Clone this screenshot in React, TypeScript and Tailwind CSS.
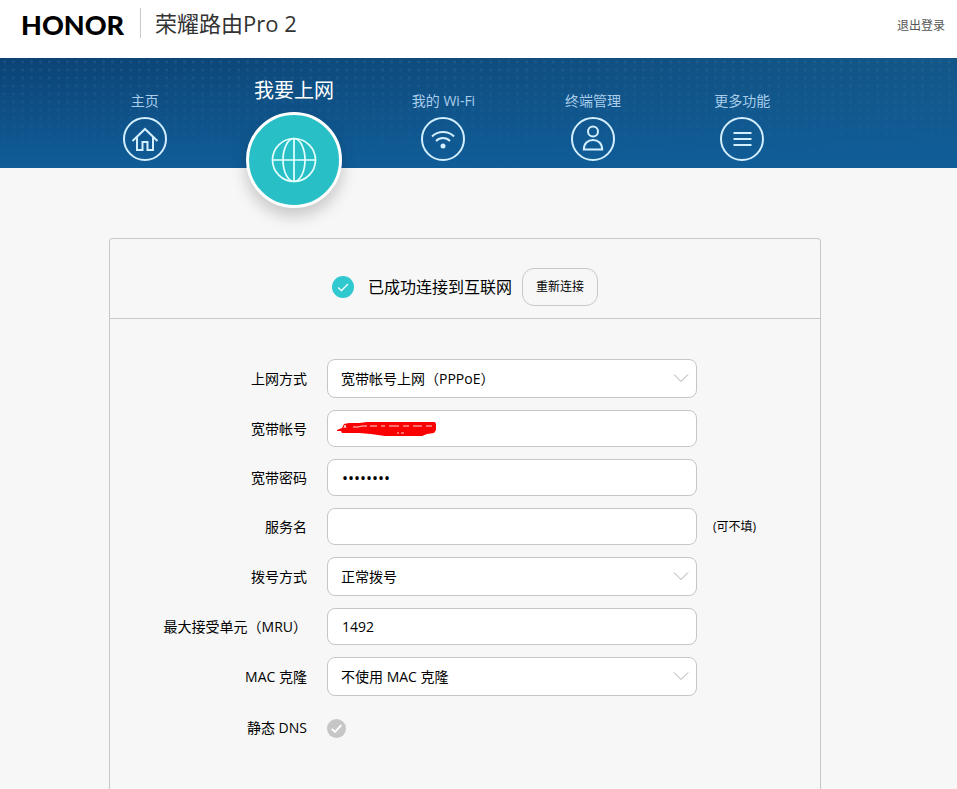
import type { ReactNode } from "react";

type NavItemProps = {
    label: string
    children: ReactNode
}

type FieldProps = {
    id: string
    label: string
    hint?: string
    children: ReactNode
}

type SelectProps = {
    id: string
    options: string[]
}

type TextInputProps = {
    id: string
    value?: string
}

const inputStyle = "block h-[37px] w-full rounded-lg border border-[#c6c6c6] bg-white px-3.5";

function NavItem({label, children}: NavItemProps) {
    return (
        <a href="#" className="flex flex-col items-center gap-1.5 pt-[33px] text-sm leading-5 text-[#a9cdea]">
            <span>{label}</span>
            <svg className="size-11" viewBox="0 0 44 44" fill="none" stroke="#d3efff" strokeWidth="2">
                <circle cx="22" cy="22" r="21" />
                {children}
            </svg>
        </a>
    );
}

function Field({id, label, hint, children}: FieldProps) {
    return (
        <div className="grid grid-cols-[197px_minmax(0,370px)_1fr] items-center">
            <label htmlFor={id} className="text-right whitespace-nowrap">{label}</label>
            <div className="relative ml-5 -mr-5">{children}</div>
            {hint && <span className="pl-9 text-xs">{hint}</span>}
        </div>
    );
}

function Select({id, options}: SelectProps) {
    return (
        <>
            <select id={id} className="block h-[39px] w-full appearance-none rounded-lg border border-[#c6c6c6] bg-white px-[13px]">
                {options.map((option) => <option key={option}>{option}</option>)}
            </select>
            <svg className="pointer-events-none absolute top-3.5 right-2 h-2.5 w-4" viewBox="0 0 16 10" fill="none" stroke="#aaaaaa">
                <path d="M1 1.5 8 8.5 15 1.5" />
            </svg>
        </>
    );
}

function TextInput({id, value}: TextInputProps) {
    return <input id={id} type="text" defaultValue={value} className={inputStyle} />;
}

export default function App() {
    return (
        <div className="flex min-h-screen flex-col bg-[#f7f7f7] font-['Open_Sans','Noto_Sans_CJK_SC',sans-serif] text-sm text-black">
            <header className="flex h-[58px] items-center bg-white pr-3 pl-[21px]">
                <span className="pb-2 font-['Lato',sans-serif] text-[27px] leading-8 font-black">HONOR</span>
                <span className="mb-3 ml-4 h-[30px] w-px bg-[#c9c9c9]" />
                <h1 className="ml-3.5 pb-3 text-[22px] leading-8 text-[#333333]">荣耀路由Pro 2</h1>
                <a href="#" className="ml-auto pb-1.5 text-xs text-[#555555]">退出登录</a>
            </header>

            <nav className="relative h-[110px] bg-linear-to-r from-[#0c4274] to-[#135788]">
                {/* dotted texture that fades out towards the bottom */}
                <div className="absolute inset-0 bg-[radial-gradient(circle,#3f7fae38_1px,transparent_2px)] bg-[size:9px_8px]" />
                <div className="absolute inset-0 bg-linear-to-b from-transparent to-[#105d98]" />
                <div className="relative mr-[140px] ml-[70px] grid grid-cols-5">
                    <NavItem label="主页">
                        <path d="M9.5 24 22 12 34.5 24M14 20.5V33h5.500v-8h5v8H30V20.5" />
                    </NavItem>
                    <a href="#" className="flex flex-col items-center gap-[7px] pt-[19px] text-xl leading-7 text-white">
                        <span>我要上网</span>
                        <span className="flex size-24 items-center justify-center rounded-full border-3 border-white bg-[#28c0c6] shadow-[0_8px_16px_rgba(0,0,0,0.2)]">
                            <svg className="size-[46px]" viewBox="0 0 46 46" fill="none" stroke="#e6ffff" strokeWidth="1.7">
                                <circle cx="23" cy="23" r="21.5" />
                                <ellipse cx="23" cy="23" rx="11" ry="21.5" />
                                <path d="M23 1.5v43M1.5 23h43" />
                            </svg>
                        </span>
                    </a>
                    <NavItem label="我的 Wi-Fi">
                        <path d="M11 19.5c6-6 16-6 22 0M15 24c4-4 10-4 14 0" />
                        <circle cx="22" cy="29" r="2.5" fill="#d3efff" stroke="none" />
                    </NavItem>
                    <NavItem label="终端管理">
                        <circle cx="22" cy="14.5" r="5" />
                        <path d="M12.8 32.500c0-6 4-9.500 9.200-9.500s9.200 3.500 9.200 9.500z" />
                    </NavItem>
                    <NavItem label="更多功能">
                        <path d="M13.500 16h18M13.500 22h18M13.500 28h18" />
                    </NavItem>
                </div>
            </nav>

            <main className="mt-[70px] mr-[136px] ml-[109px] flex-1 rounded-t border border-b-0 border-[#c8c8c8]">
                <div className="flex items-center justify-center border-b border-[#c8c8c8] pt-[29px] pb-3">
                    <svg className="size-[22px]" viewBox="0 0 22 22" fill="none">
                        <circle cx="11" cy="11" r="11" fill="#2fc9cf" />
                        <path d="M6 11.5 9.5 14.5 16 8" stroke="#ffffff" strokeWidth="1.3" />
                    </svg>
                    <p className="ml-3.5 text-base">已成功连接到互联网</p>
                    <button type="button" className="ml-2.5 h-[38px] rounded-xl border border-[#c8c8c8] px-[13px] text-xs">重新连接</button>
                </div>

                <form className="flex flex-col gap-3 pt-10">
                    <Field id="mode" label="上网方式">
                        <Select id="mode" options={["宽带帐号上网（PPPoE）"]} />
                    </Field>
                    <Field id="account" label="宽带帐号">
                        <TextInput id="account" />
                        {/* marker scribble over the account name */}
                        <svg className="pointer-events-none absolute top-[11px] left-2.5 h-4 w-[100px]" viewBox="0 0 100 16" fill="none">
                            <path d="M0 9 5 7 7 3 12 2H22L30 1H98L99 3V9L97 12 90 13 85 15H48L34 13 22 12H5L4 10H0z" fill="#fb0000" />
                            <path d="M7 7 8 4 9 7M16 6h5l4-1h5M33 5h7M44 5h4M52 5h10M66 5h6M76 5h9M89 5h6M60 12h2M64 12h3" stroke="#ffd9d9" />
                        </svg>
                    </Field>
                    <Field id="password" label="宽带密码">
                        <input id="password" type="password" defaultValue="12345678" className={`${inputStyle} text-base`} />
                    </Field>
                    <Field id="service" label="服务名" hint="(可不填)">
                        <TextInput id="service" />
                    </Field>
                    <Field id="dial" label="拨号方式">
                        <Select id="dial" options={["正常拨号"]} />
                    </Field>
                    <Field id="mru" label="最大接受单元（MRU）">
                        <TextInput id="mru" value="1492" />
                    </Field>
                    <Field id="mac" label="MAC 克隆">
                        <Select id="mac" options={["不使用 MAC 克隆"]} />
                    </Field>
                    <Field id="dns" label="静态 DNS">
                        <div className="flex h-10 items-center">
                            <input id="dns" type="checkbox" className="size-[19px] appearance-none rounded-full bg-[#c6c6c6]" />
                            <svg className="pointer-events-none absolute left-0 size-[19px]" viewBox="0 0 20 20" fill="none" stroke="#ffffff" strokeWidth="2">
                                <path d="M5 10.5 8.5 13.5 15 6.5" />
                            </svg>
                        </div>
                    </Field>
                </form>
            </main>
        </div>
    );
}
